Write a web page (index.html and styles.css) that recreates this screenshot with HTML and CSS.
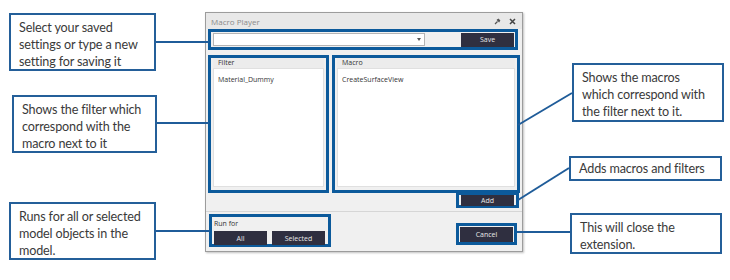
FILE: index.html
```html
<!DOCTYPE html>
<html lang="en">

<head>
    <meta charset="UTF-8" />
    <title>Macro Player</title>
    <link rel="stylesheet" href="styles.css">
</head>

<body>
    <div class="page">
        <div class="col-left">
            <div class="callout c-select">Select your saved settings or type a new setting for saving it</div>
            <div class="callout c-filter">Shows the filter which correspond with the macro next to it</div>
            <div class="callout c-run">Runs for all or selected model objects in the model.</div>
        </div>

        <div class="dialog">
            <div class="titlebar">
                <span class="title">Macro Player</span>
                <span class="title-icons">
                    <svg width="7" height="7" viewBox="0 0 7 7"><path d="M1 6 L3.5 3.5 M3 1.5 L5.5 4 M4 1 L6 3" stroke="#555" stroke-width="1.2" fill="none"/></svg>
                    <svg width="7" height="7" viewBox="0 0 7 7"><path d="M1 1 L6 6 M6 1 L1 6" stroke="#444" stroke-width="1.5" fill="none"/></svg>
                </span>
            </div>

            <div class="hl top-row">
                <div class="combo"><span class="arrow"></span></div>
                <div class="btn btn-save">Save</div>
            </div>

            <div class="lists">
                <div class="hl list-box filter-box">
                    <div class="list-head">Filter</div>
                    <div class="list-body">Material_Dummy</div>
                </div>
                <div class="hl list-box macro-box">
                    <div class="list-head">Macro</div>
                    <div class="list-body">CreateSurfaceView</div>
                </div>
            </div>

            <div class="add-row">
                <div class="hl btn-wrap"><div class="btn">Add</div></div>
            </div>

            <div class="separator"></div>

            <div class="bottom-row">
                <div class="hl run-box">
                    <div class="run-label">Run for</div>
                    <div class="run-buttons">
                        <div class="btn">All</div>
                        <div class="btn">Selected</div>
                    </div>
                </div>
                <div class="hl btn-wrap cancel-wrap"><div class="btn">Cancel</div></div>
            </div>
        </div>

        <div class="col-right">
            <div class="callout c-macros">Shows the macros<br>which correspond with<br>the filter next to it.</div>
            <div class="callout c-add">Adds macros and filters</div>
            <div class="callout c-close">This will close the extension.</div>
        </div>

        <!-- Verbindungslinien -->
        <svg class="lines" width="730" height="280">
            <g stroke="#1f5c99" stroke-width="2" fill="none">
                <line x1="156" y1="42" x2="209" y2="42" />
                <line x1="157" y1="123" x2="209" y2="123" />
                <line x1="156" y1="231" x2="210" y2="231" />
                <line x1="518" y1="125" x2="572" y2="93" />
                <line x1="518" y1="200" x2="569" y2="168" />
                <line x1="517" y1="232" x2="570" y2="232" />
            </g>
        </svg>
    </div>
</body>

</html>
```

FILE: styles.css
```css
body {
    margin: 0;
    background: #ffffff;
    font-family: Lato, "Liberation Sans", sans-serif;
}

.page {
    position: relative;
    width: 730px;
    height: 280px;
    display: flex;
}

/* Callouts */
.col-left {
    width: 205px;
    display: flex;
    flex-direction: column;
}

.col-right {
    flex: 1;
    display: flex;
    flex-direction: column;
}

.callout {
    box-sizing: border-box;
    border: 2px solid #245f99;
    background: #ffffff;
    color: #3a3a3a;
    font-size: 12.6px;
    letter-spacing: -0.15px;
    line-height: 17px;
    padding: 4px 6px 3px 8px;
}

.c-select {
    margin: 13px 0 0 9px;
    width: 147px;
    height: 58px;
}

.c-filter {
    margin: 24px 0 0 12px;
    width: 145px;
    height: 58px;
}

.c-run {
    margin: 49px 0 0 9px;
    width: 147px;
    height: 58px;
}

.c-macros {
    margin: 63px 0 0 49px;
    width: 152px;
    height: 59px;
    white-space: nowrap;
}

.c-add {
    margin: 34px 0 0 46px;
    width: 153px;
    height: 25px;
    padding-top: 2px;
}

.c-close {
    margin: 32px 0 0 47px;
    width: 152px;
    height: 41px;
}

.lines {
    position: absolute;
    left: 0;
    top: 0;
    pointer-events: none;
}

/* Dialog */
.dialog {
    box-sizing: border-box;
    width: 318px;
    height: 240px;
    margin-top: 12px;
    border: 1px solid #9c9c9c;
    background: #f0f0f0;
    box-shadow: 1px 1px 2px rgba(0, 0, 0, 0.25);
    display: flex;
    flex-direction: column;
    font-family: "Open Sans", "Liberation Sans", sans-serif;
    font-size: 7px;
}

.titlebar {
    height: 16px;
    display: flex;
    align-items: center;
    justify-content: space-between;
    padding: 0 6px 0 5px;
    background: #e8e8e8;
}

.title {
    color: #8a8a8a;
    font-size: 8px;
}

.title-icons {
    display: flex;
    gap: 8px;
}

.hl {
    box-sizing: border-box;
    border: 3px solid #0c5a9b;
}

.top-row {
    height: 21px;
    margin: 0 4px 0 2px;
    display: flex;
    align-items: center;
    justify-content: space-between;
    padding: 0 1px 0 2px;
}

.combo {
    position: relative;
    box-sizing: border-box;
    width: 212px;
    height: 13px;
    background: #ffffff;
    border: 1px solid #b4b4b4;
}

.arrow {
    position: absolute;
    right: 3px;
    top: 4px;
    border-left: 2.5px solid transparent;
    border-right: 2.5px solid transparent;
    border-top: 3px solid #555555;
}

.btn {
    box-sizing: border-box;
    width: 53px;
    height: 14px;
    background: #2f2f40;
    color: #e8e8e8;
    display: flex;
    align-items: center;
    justify-content: center;
    font-size: 7px;
}

.lists {
    height: 138px;
    margin: 5px 2px 0 2px;
    display: flex;
    gap: 3px;
}

.list-box {
    display: flex;
    flex-direction: column;
    padding: 0 2px 3px 2px;
}

.filter-box {
    width: 121px;
}

.macro-box {
    width: 188px;
}

.list-head {
    height: 10px;
    line-height: 10px;
    padding-left: 5px;
    color: #333333;
    background: #ececec;
}

.list-body {
    flex: 1;
    background: #ffffff;
    border: 1px solid #e0e0e0;
    padding: 6px 4px;
    color: #333333;
}

.add-row {
    margin: -1px 3px 0 0;
    display: flex;
    justify-content: flex-end;
}

.btn-wrap {
    width: 63px;
    height: 16px;
    display: flex;
    align-items: center;
    justify-content: center;
}

.btn-wrap .btn {
    height: 11px;
}

.separator {
    margin-top: 3px;
    border-top: 1px solid #d6d6d6;
}

.bottom-row {
    display: flex;
    justify-content: space-between;
    align-items: flex-start;
}

.run-box {
    width: 122px;
    height: 33px;
    margin: 2px 0 0 3px;
    padding: 2px 2px 0 2px;
}

.run-label {
    height: 10px;
    line-height: 10px;
    color: #333333;
}

.run-buttons {
    margin-top: 2px;
    display: flex;
    gap: 5px;
}

.cancel-wrap {
    width: 61px;
    height: 22px;
    margin: 11px 5px 0 0;
}

.cancel-wrap .btn {
    height: 15px;
}
```
